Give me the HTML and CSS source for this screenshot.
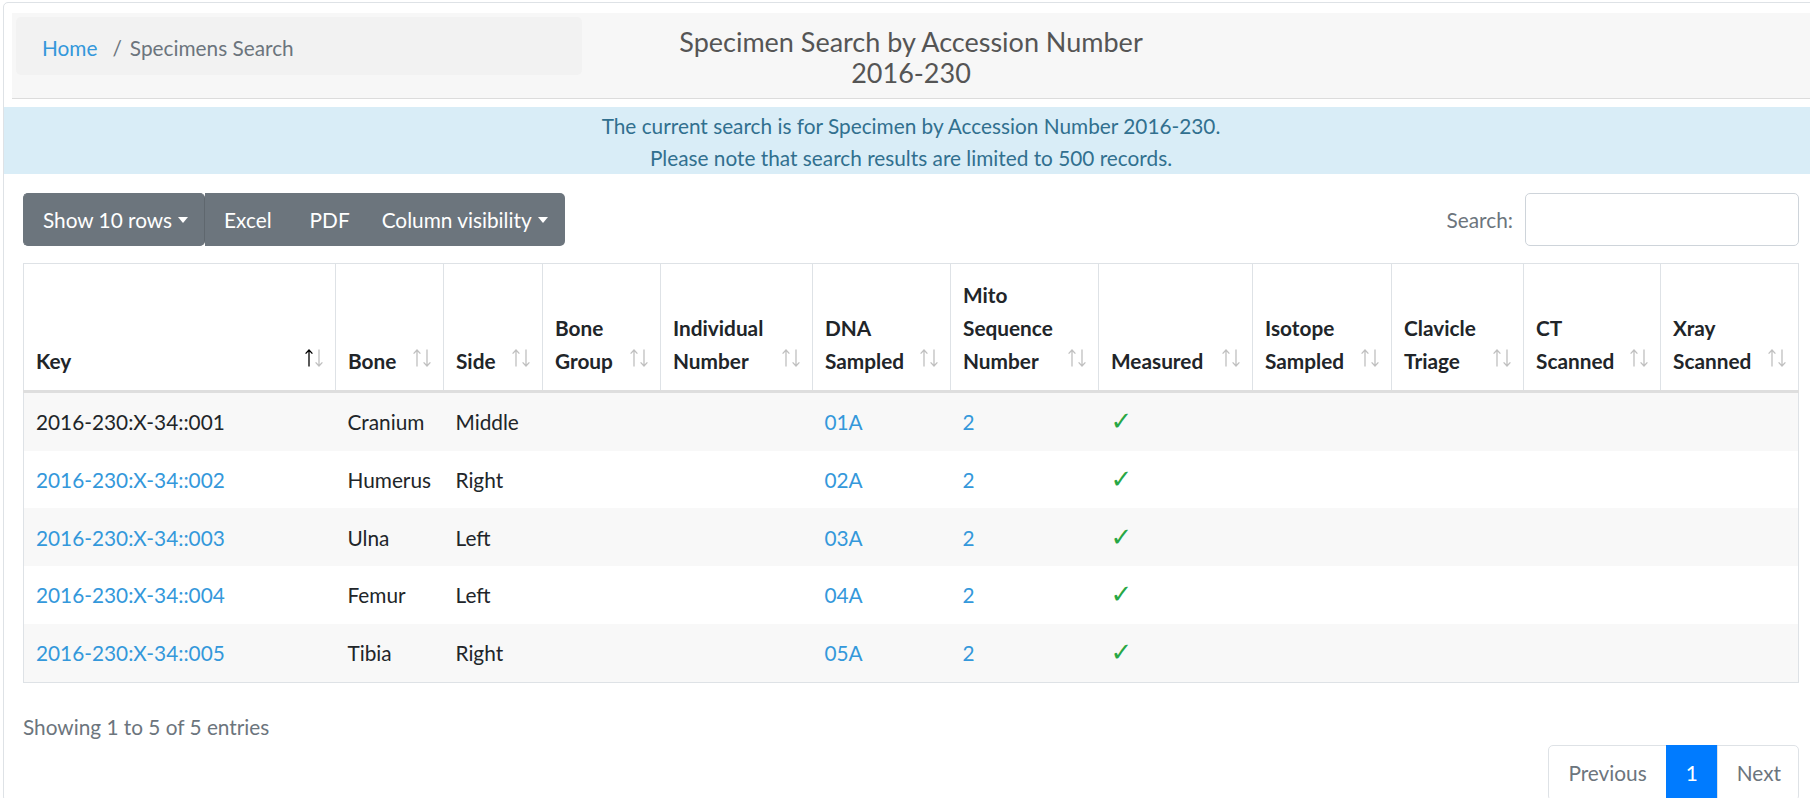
FILE: index.html
```html
<!DOCTYPE html>
<html lang="en">
<head>
<meta charset="utf-8">
<title>Specimens Search</title>
<link rel="stylesheet" href="styles.css">
</head>
<body>
<div class="card">
  <div class="page-header">
    <nav class="crumbs">
      <a href="#" class="crumb-link">Home</a>
      <span class="crumb-sep">/</span>
      <span class="crumb-current">Specimens Search</span>
    </nav>
    <h5 class="title">Specimen Search by Accession Number<br>2016-230</h5>
    <div class="spacer"></div>
  </div>

  <div class="notice">
    <p>The current search is for Specimen by Accession Number 2016-230.</p>
    <p>Please note that search results are limited to 500 records.</p>
  </div>

  <div class="card-body">
    <div class="toolbar">
      <div class="btn-row">
        <button class="btn btn-solo">Show 10 rows<span class="caret"></span></button>
        <div class="btn-group">
          <button class="btn btn-excel">Excel</button>
          <button class="btn btn-pdf">PDF</button>
          <button class="btn btn-cols">Column visibility<span class="caret"></span></button>
        </div>
      </div>
      <label class="search">Search:<input type="search" class="search-input"></label>
    </div>

    <table class="grid">
      <colgroup>
        <col class="w-key"><col class="w-bone"><col class="w-side"><col class="w-group">
        <col class="w-indiv"><col class="w-dna"><col class="w-mito"><col class="w-meas">
        <col class="w-iso"><col class="w-clav"><col class="w-ct"><col class="w-xray">
      </colgroup>
      <thead>
        <tr>
          <th><div class="th"><span>Key</span><svg class="sort asc" viewBox="0 0 20 18" width="20" height="18"><path class="up" d="M4 17.5V1M0.6 4.6L4 1L7.4 4.6"/><path class="down" d="M14 0.5V17M10.6 13.4L14 17L17.4 13.4"/></svg></div></th>
          <th><div class="th"><span>Bone</span><svg class="sort" viewBox="0 0 20 18" width="20" height="18"><path class="up" d="M4 17.5V1M0.6 4.6L4 1L7.4 4.6"/><path class="down" d="M14 0.5V17M10.6 13.4L14 17L17.4 13.4"/></svg></div></th>
          <th><div class="th"><span>Side</span><svg class="sort" viewBox="0 0 20 18" width="20" height="18"><path class="up" d="M4 17.5V1M0.6 4.6L4 1L7.4 4.6"/><path class="down" d="M14 0.5V17M10.6 13.4L14 17L17.4 13.4"/></svg></div></th>
          <th><div class="th"><span>Bone<br>Group</span><svg class="sort" viewBox="0 0 20 18" width="20" height="18"><path class="up" d="M4 17.5V1M0.6 4.6L4 1L7.4 4.6"/><path class="down" d="M14 0.5V17M10.6 13.4L14 17L17.4 13.4"/></svg></div></th>
          <th><div class="th"><span>Individual<br>Number</span><svg class="sort" viewBox="0 0 20 18" width="20" height="18"><path class="up" d="M4 17.5V1M0.6 4.6L4 1L7.4 4.6"/><path class="down" d="M14 0.5V17M10.6 13.4L14 17L17.4 13.4"/></svg></div></th>
          <th><div class="th"><span>DNA<br>Sampled</span><svg class="sort" viewBox="0 0 20 18" width="20" height="18"><path class="up" d="M4 17.5V1M0.6 4.6L4 1L7.4 4.6"/><path class="down" d="M14 0.5V17M10.6 13.4L14 17L17.4 13.4"/></svg></div></th>
          <th><div class="th"><span>Mito<br>Sequence<br>Number</span><svg class="sort" viewBox="0 0 20 18" width="20" height="18"><path class="up" d="M4 17.5V1M0.6 4.6L4 1L7.4 4.6"/><path class="down" d="M14 0.5V17M10.6 13.4L14 17L17.4 13.4"/></svg></div></th>
          <th><div class="th"><span>Measured</span><svg class="sort" viewBox="0 0 20 18" width="20" height="18"><path class="up" d="M4 17.5V1M0.6 4.6L4 1L7.4 4.6"/><path class="down" d="M14 0.5V17M10.6 13.4L14 17L17.4 13.4"/></svg></div></th>
          <th><div class="th"><span>Isotope<br>Sampled</span><svg class="sort" viewBox="0 0 20 18" width="20" height="18"><path class="up" d="M4 17.5V1M0.6 4.6L4 1L7.4 4.6"/><path class="down" d="M14 0.5V17M10.6 13.4L14 17L17.4 13.4"/></svg></div></th>
          <th><div class="th"><span>Clavicle<br>Triage</span><svg class="sort" viewBox="0 0 20 18" width="20" height="18"><path class="up" d="M4 17.5V1M0.6 4.6L4 1L7.4 4.6"/><path class="down" d="M14 0.5V17M10.6 13.4L14 17L17.4 13.4"/></svg></div></th>
          <th><div class="th"><span>CT<br>Scanned</span><svg class="sort" viewBox="0 0 20 18" width="20" height="18"><path class="up" d="M4 17.5V1M0.6 4.6L4 1L7.4 4.6"/><path class="down" d="M14 0.5V17M10.6 13.4L14 17L17.4 13.4"/></svg></div></th>
          <th><div class="th"><span>Xray<br>Scanned</span><svg class="sort" viewBox="0 0 20 18" width="20" height="18"><path class="up" d="M4 17.5V1M0.6 4.6L4 1L7.4 4.6"/><path class="down" d="M14 0.5V17M10.6 13.4L14 17L17.4 13.4"/></svg></div></th>
        </tr>
      </thead>
      <tbody>
        <tr>
          <td>2016-230:X-34::001</td><td>Cranium</td><td>Middle</td><td></td><td></td>
          <td><a href="#">01A</a></td><td><a href="#">2</a></td><td><span class="check">✓</span></td>
          <td></td><td></td><td></td><td></td>
        </tr>
        <tr>
          <td><a href="#">2016-230:X-34::002</a></td><td>Humerus</td><td>Right</td><td></td><td></td>
          <td><a href="#">02A</a></td><td><a href="#">2</a></td><td><span class="check">✓</span></td>
          <td></td><td></td><td></td><td></td>
        </tr>
        <tr>
          <td><a href="#">2016-230:X-34::003</a></td><td>Ulna</td><td>Left</td><td></td><td></td>
          <td><a href="#">03A</a></td><td><a href="#">2</a></td><td><span class="check">✓</span></td>
          <td></td><td></td><td></td><td></td>
        </tr>
        <tr>
          <td><a href="#">2016-230:X-34::004</a></td><td>Femur</td><td>Left</td><td></td><td></td>
          <td><a href="#">04A</a></td><td><a href="#">2</a></td><td><span class="check">✓</span></td>
          <td></td><td></td><td></td><td></td>
        </tr>
        <tr>
          <td><a href="#">2016-230:X-34::005</a></td><td>Tibia</td><td>Right</td><td></td><td></td>
          <td><a href="#">05A</a></td><td><a href="#">2</a></td><td><span class="check">✓</span></td>
          <td></td><td></td><td></td><td></td>
        </tr>
      </tbody>
    </table>

    <div class="info">Showing 1 to 5 of 5 entries</div>
    <div class="pager">
      <ul class="pagination">
        <li class="page-item disabled"><span class="page-link">Previous</span></li>
        <li class="page-item active"><span class="page-link">1</span></li>
        <li class="page-item disabled"><span class="page-link">Next</span></li>
      </ul>
    </div>
  </div>
</div>
</body>
</html>
```

FILE: styles.css
```css
html, body {
  overflow: hidden;
}
body {
  margin: 0;
  padding: 2px 0 0 3px;
  font-family: Lato, "Open Sans", "Liberation Sans", sans-serif;
  font-size: 20.8px;
  line-height: 31.2px;
  color: #212529;
  background: #fff;
}
a {
  color: #3498db;
  text-decoration: none;
}
.card {
  width: 1816px;
  border: 1px solid #dee2e6;
  border-radius: 5px;
  background: #fff;
  box-sizing: border-box;
}

/* header */
.page-header {
  margin: 10px 8px 0 8px;
  height: 86px;
  box-sizing: border-box;
  background: #f7f7f7;
  border-bottom: 1px solid #dcdcdc;
  display: grid;
  grid-template-columns: 1fr auto 1fr;
  align-items: start;
}
.crumbs {
  margin: 4px 0 0 4px;
  width: 566px;
  height: 58px;
  box-sizing: border-box;
  padding: 15px 26px 11px;
  background: #f2f2f2;
  border-radius: 5px;
  display: flex;
  align-items: center;
}
.crumb-sep {
  color: #6c757d;
  padding: 0 8px 0 15px;
}
.crumb-current {
  color: #6c757d;
}
.title {
  margin: 13px 0 0 0;
  font-size: 27px;
  line-height: 31px;
  font-weight: 400;
  color: #555;
  text-align: center;
}

/* notice */
.notice {
  margin-top: 8px;
  padding: 3px 0 0;
  height: 67px;
  box-sizing: border-box;
  background: #d9edf7;
  color: #31708f;
  text-align: center;
  line-height: 32.4px;
}
.notice p {
  margin: 0;
}

/* body */
.card-body {
  padding: 19px 19px 0 19px;
}
.toolbar {
  display: flex;
  justify-content: space-between;
  align-items: center;
  height: 53px;
}
.btn-row {
  display: flex;
}
.btn-group {
  display: flex;
  background: #6c757d;
  border-radius: 0 5px 5px 0;
}
.btn {
  font: inherit;
  color: #fff;
  background: #6c757d;
  border: 1px solid #6c757d;
  padding: 9.5px 18px;
  height: 53px;
  display: flex;
  align-items: center;
  cursor: pointer;
}
.btn-group .btn {
  background: transparent;
  border-color: transparent;
}
.btn-pdf {
  padding-right: 15px;
}
.btn-cols {
  padding-left: 15px;
  padding-right: 16px;
}
.btn-solo {
  border-radius: 5px;
  padding-left: 19px;
  padding-right: 16px;
  border-right-color: #5f676e;
}
.caret {
  display: inline-block;
  margin-left: 6px;
  border-top: 6px solid #fff;
  border-left: 5px solid transparent;
  border-right: 5px solid transparent;
}
.search {
  display: flex;
  align-items: center;
  color: #6c757d;
}
.search-input {
  margin-left: 12px;
  width: 274px;
  height: 53px;
  box-sizing: border-box;
  border: 1px solid #ced4da;
  border-radius: 5px;
  font: inherit;
}

/* table */
.grid {
  margin-top: 17px;
  width: 1775px;
  table-layout: fixed;
  border-collapse: collapse;
  border: 1px solid #dee2e6;
}
.w-key { width: 312px; }
.w-bone { width: 108px; }
.w-side { width: 99px; }
.w-group { width: 118px; }
.w-indiv { width: 152px; }
.w-dna { width: 138px; }
.w-mito { width: 148px; }
.w-meas { width: 154px; }
.w-iso { width: 139px; }
.w-clav { width: 132px; }
.w-ct { width: 137px; }
.w-xray { width: 138px; }

.grid th {
  text-align: left;
  vertical-align: bottom;
  font-weight: 700;
  line-height: 33px;
  padding: 14px 10px 13px 12px;
  border-left: 1px solid #dee2e6;
  border-bottom: 3px solid #dedede;
}
.th {
  display: flex;
  justify-content: space-between;
  align-items: flex-end;
}
.sort {
  flex: none;
  margin-bottom: 10px;
  fill: none;
  stroke: #000;
  stroke-width: 1.3;
}
.sort path {
  opacity: 0.25;
}
.sort.asc .up {
  opacity: 1;
}
.grid td {
  padding: 13.25px 12px;
  white-space: nowrap;
}
.grid tbody tr:nth-child(odd) {
  background: #f8f8f8;
}
.check {
  font-family: "DejaVu Sans", sans-serif;
  font-weight: 700;
  font-size: 26px;
  line-height: 0;
  color: #28a745;
}

/* footer */
.info {
  margin-top: 28px;
  color: #6c757d;
}
.pager {
  margin-top: 3px;
  display: flex;
  justify-content: flex-end;
}
.pagination {
  list-style: none;
  margin: 0;
  padding: 0;
  display: flex;
}
.page-link {
  display: block;
  padding: 11.4px 19px;
  border: 1px solid #dee2e6;
  margin-left: -1px;
  color: #6c757d;
  background: #fff;
}
.page-item:first-child .page-link {
  border-radius: 5px 0 0 5px;
  margin-left: 0;
}
.page-item:last-child .page-link {
  border-radius: 0 5px 5px 0;
  padding-right: 17px;
}
.page-item.active .page-link {
  background: #007bff;
  border-color: #007bff;
  color: #fff;
}
```
